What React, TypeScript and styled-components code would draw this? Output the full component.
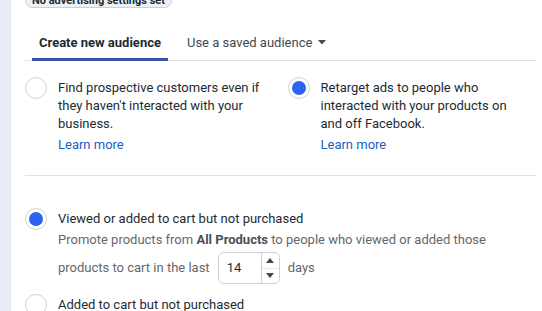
import { createGlobalStyle, styled } from 'styled-components';

const GlobalStyle = createGlobalStyle`
  html, body {
    margin: 0;
    padding: 0;
    background: #ffffff;
    overflow: hidden;
  }
  body {
    font-family: Roboto, "Liberation Sans", Arial, sans-serif;
    color: #1c2b33;
    -webkit-font-smoothing: antialiased;
  }
`;

const Radio = ({ checked }: { checked?: boolean }) => (
  <RadioCircle $checked={checked}>{checked && <span />}</RadioCircle>
);

const Stepper = () => (
  <StepperBox>
    <StepperValue>14</StepperValue>
    <StepperArrows>
      <button>
        <svg width="8" height="5" viewBox="0 0 8 5">
          <path d="M0 5 L4 0 L8 5 Z" fill="#444950" />
        </svg>
      </button>
      <button>
        <svg width="8" height="5" viewBox="0 0 8 5">
          <path d="M0 0 L4 5 L8 0 Z" fill="#444950" />
        </svg>
      </button>
    </StepperArrows>
  </StepperBox>
);

const App = () => {
  return (
    <>
      <GlobalStyle />
      <Page>
        <Rail />
        <Card>
          <Badge>No advertising settings set</Badge>

          <Tabs>
            <Tab $active>Create new audience</Tab>
            <Tab>
              Use a saved audience
              <svg width="8" height="5" viewBox="0 0 8 5">
                <path d="M0 0 L4 4.5 L8 0 Z" fill="#444950" />
              </svg>
            </Tab>
          </Tabs>

          <ChoiceGrid>
            <Choice>
              <Radio />
              <ChoiceText>
                Find prospective customers even if they haven't interacted with your business.
                <LearnMore>Learn more</LearnMore>
              </ChoiceText>
            </Choice>
            <Choice>
              <Radio checked />
              <ChoiceText>
                Retarget ads to people who interacted with your products on and off Facebook.
                <LearnMore>Learn more</LearnMore>
              </ChoiceText>
            </Choice>
          </ChoiceGrid>

          <Options>
            <Option>
              <Radio checked />
              <OptionBody>
                <OptionTitle>Viewed or added to cart but not purchased</OptionTitle>
                <OptionDesc>
                  Promote products from <b>All Products</b> to people who viewed or added those
                </OptionDesc>
                <DaysRow>
                  products to cart in the last
                  <Stepper />
                  days
                </DaysRow>
              </OptionBody>
            </Option>
            <Option>
              <Radio />
              <OptionBody>
                <OptionTitle>Added to cart but not purchased</OptionTitle>
              </OptionBody>
            </Option>
          </Options>
        </Card>
      </Page>
    </>
  );
};

const Page = styled.div`
  display: flex;
  width: 542px;
  height: 311px;
  overflow: hidden;
`;

const Rail = styled.div`
  width: 11px;
  flex-shrink: 0;
  background: #e8ecf6;
`;

const Card = styled.div`
  flex: 1;
  background: #ffffff;
  padding: 0 6px 0 14px;
  display: flex;
  flex-direction: column;
`;

const Badge = styled.div`
  align-self: flex-start;
  margin-top: -7px;
  height: 17px;
  padding: 0 6px;
  box-sizing: border-box;
  display: flex;
  align-items: center;
  border: 1px solid #cbced3;
  border-radius: 9px;
  background: #eef0f3;
  font-size: 11px;
  font-weight: 700;
  color: #1c2b33;
`;

const Tabs = styled.div`
  display: flex;
  gap: 12px;
  margin-top: 19px;
  padding-left: 7px;
  border-bottom: 1px solid #dfe1e5;
`;

const Tab = styled.div<{ $active?: boolean }>`
  display: flex;
  align-items: center;
  gap: 6px;
  height: 34px;
  padding: 0 7px;
  box-sizing: border-box;
  font-size: 13px;
  font-weight: ${({ $active }) => ($active ? 700 : 400)};
  color: ${({ $active }) => ($active ? '#1c2b33' : '#3e4a52')};
  border-bottom: 3px solid ${({ $active }) => ($active ? '#3654a8' : 'transparent')};
  margin-bottom: -1px;
`;

const ChoiceGrid = styled.div`
  display: grid;
  grid-template-columns: 1fr 1fr;
  column-gap: 14px;
  padding: 18px 0 21px;
  border-bottom: 1px solid #dfe1e5;
`;

const Choice = styled.div`
  display: flex;
  align-items: flex-start;
  gap: 11px;
`;

const RadioCircle = styled.div<{ $checked?: boolean }>`
  width: 22px;
  height: 22px;
  flex-shrink: 0;
  box-sizing: border-box;
  border-radius: 50%;
  border: 1px solid #cfd3d8;
  background: #ffffff;
  display: flex;
  align-items: center;
  justify-content: center;
  margin-top: -2px;

  & > span {
    width: 14px;
    height: 14px;
    border-radius: 50%;
    background: #2a64f0;
  }
`;

const ChoiceText = styled.div`
  font-size: 13px;
  line-height: 18px;
  color: #1c2b33;
  display: flex;
  flex-direction: column;
  padding-right: 10px;
`;

const LearnMore = styled.a`
  margin-top: 3px;
  color: #1a62c4;
  cursor: pointer;
`;

const Options = styled.div`
  display: flex;
  flex-direction: column;
  gap: 12px;
  padding-top: 34px;
`;

const Option = styled.div`
  display: flex;
  align-items: flex-start;
  gap: 11px;
`;

const OptionBody = styled.div`
  display: flex;
  flex-direction: column;
  font-size: 13px;
  line-height: 18px;
`;

const OptionTitle = styled.div`
  color: #1c2b33;
`;

const OptionDesc = styled.div`
  margin-top: 3px;
  color: #65686c;

  & b {
    font-weight: 700;
    color: #4b4f56;
  }
`;

const DaysRow = styled.div`
  display: flex;
  align-items: center;
  gap: 8px;
  margin-top: 3px;
  color: #65686c;
`;

const StepperBox = styled.div`
  display: flex;
  width: 62px;
  height: 32px;
  box-sizing: border-box;
  border: 1px solid #ced0d4;
  border-radius: 6px;
  overflow: hidden;
`;

const StepperValue = styled.div`
  flex: 1;
  display: flex;
  align-items: center;
  padding-left: 8px;
  color: #1c2b33;
`;

const StepperArrows = styled.div`
  width: 17px;
  display: flex;
  flex-direction: column;
  border-left: 1px solid #ced0d4;

  & button {
    flex: 1;
    border: none;
    background: #ffffff;
    padding: 0;
    display: flex;
    align-items: center;
    justify-content: center;
  }

  & button + button {
    border-top: 1px solid #e4e6ea;
  }
`;

export default App;
